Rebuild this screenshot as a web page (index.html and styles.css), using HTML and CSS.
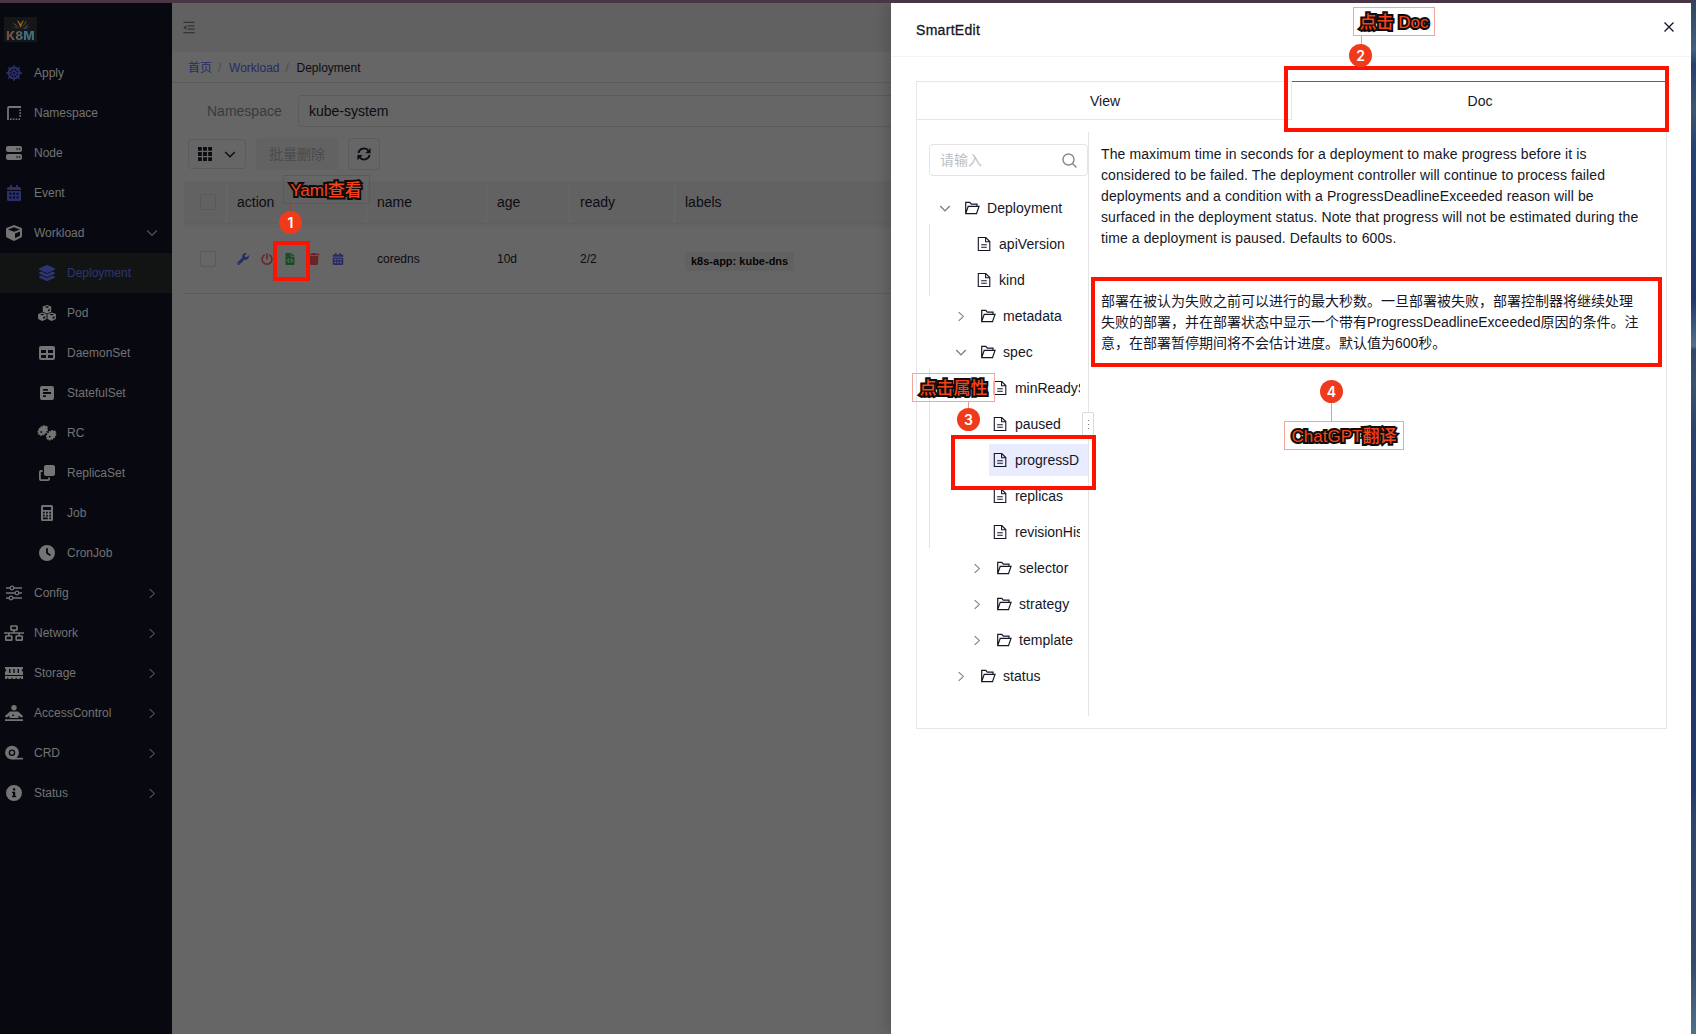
FILE: index.html
```html
<!DOCTYPE html>
<html lang="zh">
<head>
<meta charset="utf-8">
<title>K8M</title>
<link rel="stylesheet" href="styles.css">
</head>
<body>
<svg class="defs" aria-hidden="true">
  <symbol id="wheel" viewBox="0 0 16 16"><g fill="none" stroke="currentColor"><circle cx="8" cy="8" r="5.500" stroke-width="1.900"/><circle cx="8" cy="8" r="1.700" stroke-width="1.300"/><path stroke-width="1.400" d="M8 0v6.300M8 9.700V16M0 8h6.300M9.700 8H16M2.300 2.300l4.500 4.500M9.200 9.200l4.500 4.500M13.700 2.300L9.200 6.800M6.800 9.200l-4.500 4.500"/></g></symbol>
  <symbol id="border" viewBox="0 0 16 16"><path fill="none" stroke="currentColor" stroke-width="1.800" d="M2 15V3.200Q2 2 3.200 2H15"/><path stroke="currentColor" stroke-width="1.600" stroke-dasharray="1.600 1.200" d="M4 14.200h11M14.200 4.500v8"/></symbol>
  <symbol id="server" viewBox="0 0 16 16"><path fill="currentColor" fill-rule="evenodd" d="M2 1h12a2 2 0 0 1 2 2v2a2 2 0 0 1-2 2H2a2 2 0 0 1-2-2V3a2 2 0 0 1 2-2zm8.500 2.300v1.400h1.300V3.300zm2.400 0v1.400h1.300V3.300zM2 9h12a2 2 0 0 1 2 2v2a2 2 0 0 1-2 2H2a2 2 0 0 1-2-2v-2a2 2 0 0 1 2-2zm8.500 2.300v1.400h1.300v-1.400zm2.400 0v1.400h1.300v-1.400z"/></symbol>
  <symbol id="calendar" viewBox="0 0 16 16"><path fill="currentColor" fill-rule="evenodd" d="M4 0h2v2h4V0h2v2h1.500A1.500 1.500 0 0 1 15 3.500V5H1V3.500A1.500 1.500 0 0 1 2.500 2H4zM1 6h14v8.500a1.500 1.500 0 0 1-1.500 1.500h-11A1.500 1.500 0 0 1 1 14.500zm2.500 1.800v2h2v-2zm3.500 0v2h2v-2zm3.500 0v2h2v-2zm-7 3.700v2h2v-2zm3.500 0v2h2v-2zm3.500 0v2h2v-2z"/></symbol>
  <symbol id="cube" viewBox="0 0 512 512"><path fill="currentColor" d="M239.100 6.300l-208 78c-18.700 7-31.100 25-31.100 45v225.100c0 18.200 10.300 34.800 26.500 42.900l208 104c13.500 6.800 29.400 6.800 42.900 0l208-104c16.300-8.100 26.500-24.800 26.500-42.900V129.300c0-20-12.400-37.900-31.100-44.900l-208-78C262 2.200 250 2.200 239.100 6.300zM256 68.400l192 72v1.100l-192 78-192-78v-1.100l192-72zm32 356V275.500l160-65v133.900l-160 80z"/></symbol>
  <symbol id="layers" viewBox="0 0 512 512"><path fill="currentColor" d="M12.410 148.020l232.940 105.670c6.800 3.090 14.490 3.090 21.290 0l232.940-105.670c16.550-7.510 16.550-32.520 0-40.030L266.650 2.310a25.607 25.607 0 0 0-21.290 0L12.410 107.980c-16.550 7.510-16.550 32.530 0 40.040zm487.180 88.280l-58.090-26.330-161.640 73.270c-7.560 3.430-15.590 5.170-23.860 5.170s-16.290-1.740-23.860-5.170L70.510 209.970l-58.100 26.330c-16.550 7.500-16.550 32.500 0 40l232.940 105.590c6.800 3.080 14.490 3.080 21.290 0L499.590 276.300c16.550-7.500 16.550-32.500 0-40zm0 127.800l-57.870-26.230-161.860 73.370c-7.560 3.430-15.590 5.170-23.860 5.170s-16.290-1.740-23.860-5.170L70.290 337.870 12.410 364.100c-16.550 7.500-16.550 32.500 0 40l232.940 105.590c6.800 3.080 14.490 3.080 21.290 0L499.590 404.100c16.550-7.500 16.550-32.500 0-40z"/></symbol>
  <symbol id="cubes" viewBox="0 0 18 16"><g id="cb"><path fill="currentColor" d="M9 0l4.200 1.500V6.700L9 8.500 4.800 6.700V1.500z"/><path fill="#080910" d="M9 1.300l2.300.8L9 3l-2.300-.9zM9.900 4.700l2-.8v1.700l-2 1z"/></g><use href="#cb" x="-4.700" y="7.400"/><use href="#cb" x="4.700" y="7.400"/></symbol>
  <symbol id="table" viewBox="0 0 16 16"><path fill="currentColor" fill-rule="evenodd" d="M2 1h12a2 2 0 0 1 2 2v10a2 2 0 0 1-2 2H2a2 2 0 0 1-2-2V3a2 2 0 0 1 2-2zm0 4v3h5V5zm7 0v3h5V5zm-7 5v3h5v-3zm7 0v3h5v-3z"/></symbol>
  <symbol id="poll" viewBox="0 0 16 16"><path fill="currentColor" fill-rule="evenodd" d="M3 1h10a2 2 0 0 1 2 2v10a2 2 0 0 1-2 2H3a2 2 0 0 1-2-2V3a2 2 0 0 1 2-2zm1 3v1.800h5V4zm0 3.100v1.800h8V7.100zm0 3.100V12h3v-1.800z"/></symbol>
  <symbol id="rings" viewBox="0 0 20 16"><g id="rg"><ellipse cx="5.800" cy="5.500" rx="5.200" ry="3.600" transform="rotate(-45 5.800 5.500)" fill="currentColor" stroke="currentColor" stroke-width="1.600" stroke-dasharray="1.700 .9"/><circle cx="4.300" cy="7" r=".9" fill="#080910"/></g><use href="#rg" x="8.400" y="4.700"/></symbol>
  <symbol id="clone" viewBox="0 0 16 16"><rect x="5" width="11" height="11" rx="2" fill="currentColor"/><path fill="none" stroke="currentColor" stroke-width="1.800" d="M3.500 6H2Q.9 6 .9 7v7q0 1.100 1.100 1.100h7q1.100 0 1.100-1.100v-1.500"/></symbol>
  <symbol id="calc" viewBox="0 0 16 16"><path fill="currentColor" fill-rule="evenodd" d="M3.500 0h9A1.500 1.500 0 0 1 14 1.500v13a1.500 1.500 0 0 1-1.500 1.500h-9A1.500 1.500 0 0 1 2 14.500v-13A1.500 1.500 0 0 1 3.500 0zM4 2v3h8V2zm0 4.800v1.700h1.700V6.800zm3.100 0v1.700h1.700V6.800zm3.200 0v1.700H12V6.800zM4 9.700v1.700h1.700V9.700zm3.100 0v1.700h1.700V9.700zm3.200 0v1.700H12V9.700zM4 12.500v1.700h4.800v-1.700zm6.300 0v1.700H12v-1.700z"/></symbol>
  <symbol id="clock" viewBox="0 0 512 512"><path fill="currentColor" fill-rule="evenodd" d="M256 0a256 256 0 1 1 0 512A256 256 0 1 1 256 0zM226 100V256c0 10 5 18 12 22l96 64c11 7.400 29 4.400 36-6.700s4.400-29-6.700-36L286 243.200V100z"/></symbol>
  <symbol id="sliders" viewBox="0 0 16 16"><path stroke="currentColor" stroke-width="1.600" d="M0 3h4M8 3h8M0 8h9M13 8h3M0 13h3M7 13h9"/><g fill="none" stroke="currentColor" stroke-width="1.300"><circle cx="6" cy="3" r="1.800"/><circle cx="11" cy="8" r="1.800"/><circle cx="5" cy="13" r="1.800"/></g></symbol>
  <symbol id="network" viewBox="0 0 20 16"><g fill="none" stroke="currentColor" stroke-width="1.700"><rect x="7" y="1" width="6" height="4.200" rx=".6"/><rect x="1.800" y="11" width="6" height="4.200" rx=".6"/><rect x="12.200" y="11" width="6" height="4.200" rx=".6"/><path d="M0 8h20M10 5v3M4.800 8v3M15.200 8v3"/></g></symbol>
  <symbol id="memory" viewBox="0 0 18 16"><path fill="currentColor" fill-rule="evenodd" d="M0 2h18v2a1 1 0 0 0 0 2.500V10H0V6.500A1 1 0 0 0 0 4zm4 2v4h1.400V4zm4.300 0v4h1.400V4zm4.300 0v4H14V4zM0 11h18v3h-2v-1.200h-1.200V14h-3v-1.200h-1.200V14H7.500v-1.200H6.300V14h-3v-1.200H2V14H0z"/></symbol>
  <symbol id="person" viewBox="0 0 18 16"><circle cx="9" cy="2.700" r="2.700" fill="currentColor"/><path fill="currentColor" fill-rule="evenodd" d="M5 6.500h8l5 4.500-1.200 1.800-3.300-2V13H4.500v-2.200l-3.300 2L0 11zM8.500 9l-1.800 2H9zM0 14.200h18V16H0z"/></symbol>
  <symbol id="tape" viewBox="0 0 18 16"><path fill="currentColor" d="M7 12.800h11V14.500H7z"/><circle cx="7" cy="7.700" r="6.900" fill="currentColor"/><circle cx="7" cy="7.700" r="2.600" fill="none" stroke="#080910" stroke-width="1.400"/></symbol>
  <symbol id="info" viewBox="0 0 16 16"><path fill="currentColor" fill-rule="evenodd" d="M8 0a8 8 0 1 1 0 16A8 8 0 0 1 8 0zM7 3.300v2.200h2.200V3.300zM6 6.800v1.500h1v2.500H6v1.500h4.200v-1.500h-1v-4z"/></symbol>
  <symbol id="right" viewBox="0 0 10 14"><path fill="none" stroke="currentColor" stroke-width="1.100" d="M2.500 2.300L7.500 7l-5 4.700"/></symbol>
  <symbol id="down" viewBox="0 0 12 12"><path fill="none" stroke="currentColor" stroke-width="1.200" d="M1.300 3.500L6 8.300l4.700-4.800"/></symbol>
  <symbol id="folder" viewBox="0 0 16 14"><path fill="none" stroke="currentColor" stroke-width="1.200" d="M13 5V3.200H7.300L5.800 1.400H1.700v11.200h10.800L15 5.400H4.200l-2.400 7"/></symbol>
  <symbol id="file" viewBox="0 0 14 16"><path fill="none" stroke="currentColor" stroke-width="1.100" d="M1.300 1.500h7.500l4 4v9H1.300zM8.600 1.700v4h4M4.200 8.700h5.600M4.200 11.300h5.600"/></symbol>
  <symbol id="wrench" viewBox="0 0 512 512"><path fill="currentColor" d="M507.730 109.100c-2.240-9.030-13.540-12.090-20.120-5.510l-74.360 74.360-67.880-11.310-11.310-67.880 74.360-74.360c6.620-6.620 3.430-17.900-5.660-20.160-47.380-11.740-99.550.91-136.580 37.930-39.640 39.640-50.550 97.100-34.050 147.200L18.740 402.760c-24.990 24.990-24.990 65.510 0 90.500 24.990 24.990 65.510 24.990 90.500 0l213.210-213.210c50.120 16.710 107.470 5.680 147.370-34.220 37.070-37.070 49.700-89.320 37.910-136.730zM64 472c-13.250 0-24-10.750-24-24 0-13.260 10.750-24 24-24s24 10.740 24 24c0 13.250-10.750 24-24 24z"/></symbol>
</svg>

<div class="topbar"></div>
<div class="app">
  <nav class="side">
    <div class="logo">
      <svg viewBox="0 0 33 12"><path fill="#8b6a14" d="M16.500 11L13 3l2 1.500L16.500 7 18 4.500 20 3z"/><path fill="#7a3d2c" d="M15.500 12L8 5.500l4 2zM17.500 12l4-8 1 1z"/><path fill="#28506c" d="M14.500 12L8 9.500l5 1zM18.500 12l6-5.500-2 3.500zM19 12l7-2.500-4 2.500z"/></svg>
      <b>K8M</b>
    </div>
    <a class="item"><svg class="ic blue"><use href="#wheel"/></svg>Apply</a>
    <a class="item"><svg class="ic"><use href="#border"/></svg>Namespace</a>
    <a class="item"><svg class="ic"><use href="#server"/></svg>Node</a>
    <a class="item"><svg class="ic blue"><use href="#calendar"/></svg>Event</a>
    <a class="item"><svg class="ic"><use href="#cube"/></svg>Workload<svg class="caret open"><use href="#down"/></svg></a>
    <a class="item sub on"><svg class="ic"><use href="#layers"/></svg>Deployment</a>
    <a class="item sub"><svg class="ic"><use href="#cubes"/></svg>Pod</a>
    <a class="item sub"><svg class="ic"><use href="#table"/></svg>DaemonSet</a>
    <a class="item sub"><svg class="ic"><use href="#poll"/></svg>StatefulSet</a>
    <a class="item sub"><svg class="ic"><use href="#rings"/></svg>RC</a>
    <a class="item sub"><svg class="ic"><use href="#clone"/></svg>ReplicaSet</a>
    <a class="item sub"><svg class="ic"><use href="#calc"/></svg>Job</a>
    <a class="item sub"><svg class="ic"><use href="#clock"/></svg>CronJob</a>
    <a class="item"><svg class="ic"><use href="#sliders"/></svg>Config<svg class="caret"><use href="#right"/></svg></a>
    <a class="item"><svg class="ic"><use href="#network"/></svg>Network<svg class="caret"><use href="#right"/></svg></a>
    <a class="item"><svg class="ic"><use href="#memory"/></svg>Storage<svg class="caret"><use href="#right"/></svg></a>
    <a class="item"><svg class="ic"><use href="#person"/></svg>AccessControl<svg class="caret"><use href="#right"/></svg></a>
    <a class="item"><svg class="ic"><use href="#tape"/></svg>CRD<svg class="caret"><use href="#right"/></svg></a>
    <a class="item"><svg class="ic"><use href="#info"/></svg>Status<svg class="caret"><use href="#right"/></svg></a>
  </nav>

  <main class="main">
    <header class="head"><svg viewBox="0 0 13 13"><path stroke="currentColor" stroke-width="1.500" d="M.5 1h12M5 4.700h7.500M5 8.300h7.500M.5 12h12"/><path fill="currentColor" d="M3.500 4v5L.3 6.500z"/></svg></header>
    <div class="crumbs"><a>首页</a><i>/</i><a>Workload</a><i>/</i><span>Deployment</span></div>
    <div class="filter"><label>Namespace</label><div class="select">kube-system</div></div>
    <div class="tools">
      <div class="btn cols"><svg viewBox="0 0 14 14" width="14" height="14"><path fill="currentColor" d="M0 0h3.800v3.800H0zM5.100 0h3.800v3.800H5.100zM10.200 0H14v3.800h-3.800zM0 5.100h3.800v3.800H0zM5.100 5.100h3.800v3.800H5.100zM10.200 5.100H14v3.800h-3.800zM0 10.200h3.800V14H0zM5.100 10.200h3.800V14H5.100zM10.200 10.200H14V14h-3.800z"/></svg><svg viewBox="0 0 12 12" width="12" height="12"><path fill="none" stroke="currentColor" stroke-width="1.400" d="M1.200 4L6 8.800 10.800 4"/></svg></div>
      <div class="btn bulk">批量删除</div>
      <div class="btn sq"><svg viewBox="0 0 16 16" width="14" height="14"><path fill="none" stroke="currentColor" stroke-width="2" d="M1.500 6.800A6.600 6.600 0 0 1 13.300 4.500M14.500 9.200A6.600 6.600 0 0 1 2.700 11.500"/><path fill="currentColor" d="M15.500 1v6H9.500zM.5 15V9h6z"/></svg></div>
    </div>
    <div class="table">
      <div class="tr th"><div><span class="check"></span></div><div>action</div><div>name</div><div>age</div><div>ready</div><div>labels</div></div>
      <div class="gapline"></div>
      <div class="tr td"><div><span class="check"></span></div>
        <div class="acts">
          <svg class="c-blue"><use href="#wrench"/></svg>
          <svg class="c-red" viewBox="0 0 16 16"><path fill="none" stroke="currentColor" stroke-width="2" stroke-linecap="round" d="M4.300 2.800a6.600 6.600 0 1 0 7.400 0M8 1v7"/></svg>
          <svg class="c-green" viewBox="0 0 16 16"><path fill="currentColor" fill-rule="evenodd" d="M3.500 0H9v5h5v9.500a1.500 1.500 0 0 1-1.500 1.500h-9A1.500 1.500 0 0 1 2 14.500v-13A1.500 1.500 0 0 1 3.500 0zM10 0l4 4h-4zM6.500 7L3.700 10l2.800 3 1-1L5.700 10l1.800-2zm3 0l-1 1 1.800 2-1.800 2 1 1 2.800-3z"/></svg>
          <svg class="c-red" viewBox="0 0 16 16"><path fill="currentColor" d="M1 1h4l1-1h4l1 1h4v2H1zM2 4h12l-.7 10.600a1.500 1.500 0 0 1-1.500 1.400H4.200a1.500 1.500 0 0 1-1.500-1.400z"/></svg>
          <svg class="c-blue"><use href="#calendar"/></svg>
        </div>
        <div>coredns</div><div>10d</div><div>2/2</div><div><span class="tag">k8s-app: kube-dns</span></div></div>
    </div>
  </main>
</div>
<div class="desktop"></div>

<section class="drawer">
  <header class="dhead"><span>SmartEdit</span><svg viewBox="0 0 10 10"><path stroke="currentColor" stroke-width="1.300" d="M.5.5l9 9M9.500.5l-9 9"/></svg></header>
  <div class="panel">
    <div class="tabs"><div class="tab">View</div><div class="tab active">Doc</div></div>
    <div class="body">
      <aside class="tree">
        <div class="search"><span>请输入</span><svg viewBox="0 0 15 15"><circle cx="6.500" cy="6.500" r="5.500" fill="none" stroke="currentColor" stroke-width="1.400"/><path stroke="currentColor" stroke-width="1.400" d="M10.500 10.500l4 4"/></svg></div>
        <ul>
          <li class="n0"><svg class="tc"><use href="#down"/></svg><svg class="fo"><use href="#folder"/></svg><span>Deployment</span></li>
          <li><ul class="leafs first">
            <li><svg class="fi"><use href="#file"/></svg><span>apiVersion</span></li>
            <li><svg class="fi"><use href="#file"/></svg><span>kind</span></li>
          </ul></li>
          <li class="n1"><svg class="tc"><use href="#right"/></svg><svg class="fo"><use href="#folder"/></svg><span>metadata</span></li>
          <li class="n1"><svg class="tc"><use href="#down"/></svg><svg class="fo"><use href="#folder"/></svg><span>spec</span></li>
          <li><ul class="leafs second">
            <li><svg class="fi"><use href="#file"/></svg><span>minReadySeconds</span></li>
            <li><svg class="fi"><use href="#file"/></svg><span>paused</span></li>
            <li class="sel"><svg class="fi"><use href="#file"/></svg><span>progressD</span></li>
            <li><svg class="fi"><use href="#file"/></svg><span>replicas</span></li>
            <li><svg class="fi"><use href="#file"/></svg><span>revisionHistoryLimit</span></li>
          </ul></li>
          <li class="n2"><svg class="tc"><use href="#right"/></svg><svg class="fo"><use href="#folder"/></svg><span>selector</span></li>
          <li class="n2"><svg class="tc"><use href="#right"/></svg><svg class="fo"><use href="#folder"/></svg><span>strategy</span></li>
          <li class="n2"><svg class="tc"><use href="#right"/></svg><svg class="fo"><use href="#folder"/></svg><span>template</span></li>
          <li class="n1"><svg class="tc"><use href="#right"/></svg><svg class="fo"><use href="#folder"/></svg><span>status</span></li>
        </ul>
        <div class="grip"></div>
      </aside>
      <article class="doc">
        <p>The maximum time in seconds for a deployment to make progress before it is<br>considered to be failed. The deployment controller will continue to process failed<br>deployments and a condition with a ProgressDeadlineExceeded reason will be<br>surfaced in the deployment status. Note that progress will not be estimated during the<br>time a deployment is paused. Defaults to 600s.</p>
        <p class="zh">部署在被认为失败之前可以进行的最大秒数。一旦部署被失败，部署控制器将继续处理<br>失败的部署，并在部署状态中显示一个带有ProgressDeadlineExceeded原因的条件。注<br>意，在部署暂停期间将不会估计进度。默认值为600秒。</p>
      </article>
    </div>
  </div>
</section>

<div class="box box1"></div><div class="box box2"></div><div class="box box3"></div><div class="box box4"></div>
<div class="line l1"></div><div class="line l2"></div><div class="line l3"></div><div class="line l4"></div>
<div class="note n-1">Yaml查看</div><div class="note n-2">点击 Doc</div><div class="note n-3">点击属性</div><div class="note n-4">ChatGPT翻译</div>
<div class="num c1">1</div><div class="num c2">2</div><div class="num c3">3</div><div class="num c4">4</div>
</body>
</html>
```
FILE: styles.css
```css
* { box-sizing: border-box; }
body { margin: 0; height: 1034px; overflow: hidden; position: relative; display: flex; flex-direction: column; background: #666; color: #0b0c12; font: 14px/20px "Liberation Sans", Arial, "Noto Sans CJK SC", sans-serif; }
ul { list-style: none; margin: 0; padding: 0; }
.defs { position: absolute; width: 0; height: 0; }
.topbar { height: 3px; background: #4a3545; flex: none; }
.app { flex: 1; display: flex; }

.side { width: 172px; background: #080910; font-size: 12px; color: #737373; }
.logo { width: 33px; height: 25px; margin: 14px 0 11px 4px; background: #151617; display: flex; flex-direction: column; align-items: center; }
.logo svg { width: 33px; height: 12px; flex: none; }
.logo b { font: 800 12px/13px Inter, "Liberation Sans", sans-serif; letter-spacing: .2px; background: linear-gradient(90deg, #7c4640, #6a6552 35%, #446a78 55%, #3a7280); -webkit-background-clip: text; background-clip: text; color: transparent; }
.item { height: 40px; display: flex; align-items: center; padding-left: 4px; }
.item.sub { padding-left: 37px; }
.ic { width: 20px; height: 16px; margin-right: 10px; color: #747474; }
.ic.blue { color: #29306b; }
.on { background: #121414; color: #2e3473; }
.on .ic { color: #2e3473; }
.caret { width: 10px; height: 13px; margin-left: auto; margin-right: 15px; color: #565656; }
.caret.open { width: 12px; height: 12px; margin-right: 14px; }

.main { flex: 1; }
.head { height: 49px; background: #616161; padding: 18px 0 0 11px; color: #333; }
.head svg { width: 12px; height: 13px; display: block; }
.crumbs { height: 31px; border-bottom: 1px solid #5b5b5b; padding: 1px 0 0 16px; font-size: 12px; display: flex; align-items: center; }
.crumbs a { color: #272b66; }
.crumbs i { font-style: normal; color: #4a4a4a; width: 17px; padding-left: 6px; }
.filter { display: flex; align-items: center; padding: 12px 0 0 35px; color: #393a3c; }
.filter label { width: 91px; }
.select { flex: 1; height: 32px; border: 1px solid #5b5b5b; border-radius: 4px; padding: 5px 10px; color: #0b0c12; }
.tools { display: flex; padding: 11px 0 0 16px; align-items: center; }
.btn { border: 1px solid #5b5b5b; border-radius: 4px; height: 32px; display: flex; align-items: center; justify-content: center; }
.cols { width: 58px; height: 30px; gap: 12px; }
.bulk { width: 82px; margin: 0 10px; border: 0; background: #626262; color: #4b4b4c; }
.sq { width: 32px; }
.table { margin: 11px 0 0 12px; }
.tr { display: grid; grid-template-columns: 43px 140px 120px 83px 105px 1fr; align-items: center; }
.tr > div { padding-left: 10px; }
.tr > div:first-child { padding-left: 16px; }
.th { height: 42px; background: #626262; }
.th > div { height: 42px; display: flex; align-items: center; border-right: 1px solid #686868; }
.th > div:last-child { border: 0; }
.gapline { height: 5px; background: #636363; border-top: 1px solid #5f5f5f; }
.td { height: 66px; border-bottom: 1px solid #5b5b5b; font-size: 12px; padding-bottom: 4px; }
.check { display: block; width: 16px; height: 16px; border: 1px solid #5a5a5a; border-radius: 2px; }
.acts { display: flex; }
.acts svg { width: 12px; height: 12px; margin-right: 11.700px; flex: none; }
.c-blue { color: #272c69; }
.c-red { color: #6b2426; }
.c-green { color: #1a4d24; }
.tag { display: inline-block; background: #616161; border-radius: 3px; font-weight: bold; font-size: 11px; line-height: 19px; padding: 0 6px; position: relative; top: 2px; color: #050505; white-space: nowrap; }

.desktop { position: absolute; right: 0; top: 0; width: 5px; height: 1034px; background: linear-gradient(#33435f 0, #3f6180 50px, #263f70 65px, #3b5870 110px, #234078 150px, #20396f 300px, #50718a 346px, #344668 350px, #39546c 385px, #294370 430px, #1f3768 640px, #203b70 790px, #30456b 820px, #34496b 960px, #4d7189 1034px); }

.drawer { position: absolute; left: 891px; top: 3px; width: 800px; height: 1031px; background: #fff; color: #151726; box-shadow: -5px 0 12px rgba(0,0,0,.14); clip-path: inset(0 0 0 -30px); }
.dhead { height: 54px; border-bottom: 1px solid #f3f3f4; padding: 0 17px 0 25px; display: flex; align-items: center; justify-content: space-between; }
.dhead span { -webkit-text-stroke: .3px; letter-spacing: .3px; }
.dhead svg { width: 10px; height: 10px; margin-bottom: 6px; }
.panel { margin: 24px 24px 0 25px; height: 648px; border: 1px solid #e6e6e8; border-top: 0; }
.tabs { display: flex; height: 39px; }
.tab { flex: 1; padding-left: 2px; text-align: center; line-height: 38px; border-top: 1px solid #e6e6e8; border-bottom: 1px solid #e6e6e8; border-right: 1px solid #e6e6e8; }
.tab.active { border-top-color: #4a57d6; border-bottom: 0; border-right: 0; }
.body { display: flex; padding: 12px; }
.tree { width: 160px; height: 584px; border-right: 1px solid #e4e4e6; padding-top: 12px; position: relative; flex: none; }
.search { height: 32px; border: 1px solid #e4e4e7; border-radius: 4px; padding: 0 10px; display: flex; align-items: center; justify-content: space-between; color: #bcbec4; margin-bottom: 16px; }
.search svg { width: 15px; height: 15px; color: #84878f; }
.tree li[class^="n"], .leafs li { height: 32px; margin-bottom: 4px; display: flex; align-items: center; }
.tree li span { flex: 1; overflow: hidden; white-space: nowrap; margin-right: 8px; letter-spacing: .05px; }
.n0 { padding-left: 10px; } .n1 { padding-left: 26px; } .n2 { padding-left: 42px; }
.tc { width: 12px; height: 13px; color: #74777f; margin-right: 13px; flex: none; }
.fo { width: 16px; height: 14px; margin-right: 7px; flex: none; }
.fi { width: 14px; height: 16px; margin: 0 8px 0 4px; flex: none; }
.leafs { position: relative; }
.leafs::before { content: ""; position: absolute; left: 0; top: -4px; bottom: 0; border-left: 1px solid #e4e4e6; }
.leafs.first { padding-left: 44px; }
.leafs.second { padding-left: 60px; }
.leafs.second span { letter-spacing: -.05px; }
.sel { background: #e8ecfe; }
.grip { position: absolute; right: -6px; top: 280px; width: 12px; height: 24px; border: 1px solid #d8d9dd; border-radius: 2px; background: #fff; }
.grip::after { content: ""; position: absolute; left: 5px; top: 7px; width: 1px; height: 10px; background: repeating-linear-gradient(#777 0 1px, #fff 1px 4px); }
.doc { padding: 12px 0 0 12px; line-height: 21px; white-space: nowrap; letter-spacing: .095px; }
.doc p { margin: 0 0 42px; }
.doc .zh { letter-spacing: 0; }

.box { position: absolute; border: 4px solid #ff1200; }
.box1 { left: 273px; top: 241px; width: 37px; height: 40px; }
.box2 { left: 1284px; top: 66px; width: 385px; height: 66px; }
.box3 { left: 951px; top: 435px; width: 145px; height: 55px; }
.box4 { left: 1091px; top: 277px; width: 571px; height: 90px; }
.note { position: absolute; border: 1px solid #f5a69c; height: 29px; color: #f5431c; font: 500 17px/30px "Liberation Sans", "Noto Sans CJK SC", sans-serif; text-align: center; white-space: nowrap; -webkit-text-stroke: 4px #100c0a; paint-order: stroke fill; }
.n-1 { left: 283px; top: 175px; width: 87px; border-color: #92443a; padding-right: 1px; }
.n-2 { left: 1353px; top: 7px; width: 82px; }
.n-3 { left: 912px; top: 373px; width: 83px; }
.n-4 { left: 1284px; top: 421px; width: 120px; }
.num { position: absolute; width: 23px; height: 23px; border-radius: 50%; background: #ef3a1c; color: #fff; font: 600 14px/23px Inter, sans-serif; text-align: center; }
.c1 { left: 279px; top: 211px; } .c2 { left: 1349px; top: 44px; } .c3 { left: 957px; top: 408px; } .c4 { left: 1320px; top: 380px; }
.line { position: absolute; width: 1px; background: #f39486; }
.l1 { left: 290px; top: 203px; height: 10px; background: #92443a; }
.l2 { left: 1361px; top: 36px; height: 9px; }
.l3 { left: 968px; top: 402px; height: 8px; }
.l4 { left: 1331px; top: 403px; height: 18px; }
```
